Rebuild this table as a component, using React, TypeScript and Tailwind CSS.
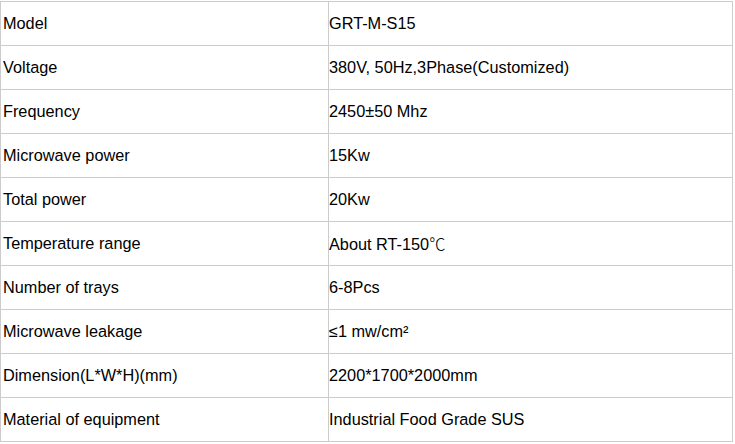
import type { ReactNode } from "react";

const rows: [string, ReactNode][] = [
  ["Model", "GRT-M-S15"],
  ["Voltage", "380V, 50Hz,3Phase(Customized)"],
  ["Frequency", "2450±50 Mhz"],
  ["Microwave power", "15Kw"],
  ["Total power", "20Kw"],
  [
    "Temperature range",
    <>
      About RT-150
      <span className="font-['Noto_Sans_CJK_SC',sans-serif] font-light">℃</span>
    </>,
  ],
  ["Number of trays", "6-8Pcs"],
  ["Microwave leakage", "≤1 mw/cm²"],
  ["Dimension(L*W*H)(mm)", "2200*1700*2000mm"],
  ["Material of equipment", "Industrial Food Grade SUS"],
];

const App = () => {
  return (
    <div className="w-[735px] h-[444px] bg-white text-black font-['Liberation_Sans',Arial,sans-serif] text-[16.3px]">
      <div className="mt-px w-[733px] border-l border-t border-[#cccccc]">
        {rows.map(([label, value]) => (
          <div key={label} className="flex h-[44px] border-b border-[#cccccc]">
            <div className="flex w-[328px] items-center border-r border-[#cccccc] pl-[2px]">
              {label}
            </div>
            <div className="flex flex-1 items-center border-r border-[#cccccc]">
              <span>{value}</span>
            </div>
          </div>
        ))}
      </div>
    </div>
  );
};

export default App;
